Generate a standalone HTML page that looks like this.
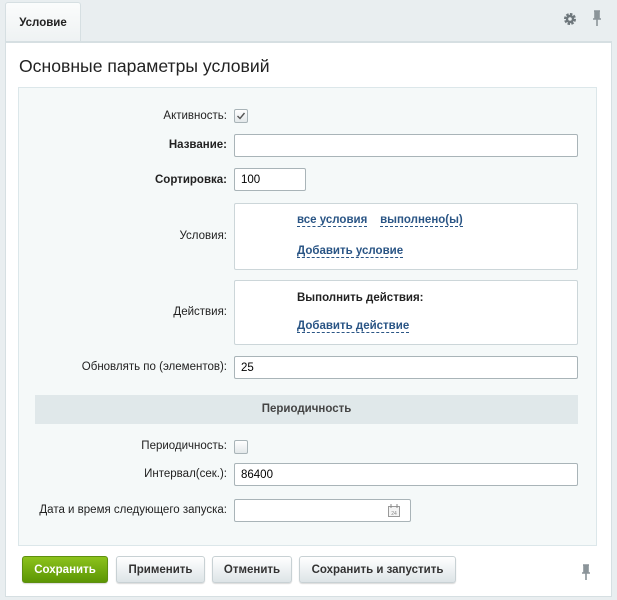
<!DOCTYPE html>
<html><head><meta charset="utf-8"><style>
body{margin:0;width:617px;height:600px;background:#e9eef0;font-family:"Liberation Sans",Arial,sans-serif;font-size:11.5px;color:#000;position:relative;overflow:hidden}
.abs{position:absolute}
.tab{left:5px;top:2px;width:74px;height:39px;background:linear-gradient(#fbfcfc,#eef2f3);border:1px solid #d6dfe2;border-bottom:none;border-radius:3px 3px 0 0;font-weight:bold;font-size:11.5px;line-height:40px;text-align:center;color:#222}
.panel{left:5px;top:41px;width:605px;height:553px;background:#fff;border:1px solid #d6dfe2;border-top:2px solid #d6dfe2}
.title{left:19px;top:56px;font-size:17.6px;color:#222}
.box{left:18px;top:87px;width:577px;height:457px;background:#f5f9f9;border:1px solid #dce7ea}
.lbl{position:absolute;right:390px;text-align:right;color:#222}
.inp{position:absolute;left:234px;height:21px;background:#fff;border:1px solid #a9b4b8;border-radius:2px;box-sizing:border-box;padding:4px 6px;line-height:14px}
.cb{position:absolute;left:234px;width:12px;height:12px;border:1px solid #a9b4b8;border-radius:2px;background:linear-gradient(#fff,#e3e8ea)}
.wbox{position:absolute;left:234px;width:344px;background:#fff;border:1px solid #ccd6d9;border-radius:2px;box-sizing:border-box}
.lnk{color:#2a5585;font-weight:bold;border-bottom:1px dashed #2a5585}
.btn{position:absolute;top:556px;height:27px;border-radius:3px;box-sizing:border-box;text-align:center;line-height:26px;font-weight:bold;color:#333;background:linear-gradient(#fff,#dde4e7);border:1px solid #c8d1d4;box-shadow:0 1px 1px rgba(0,0,0,.15)}
</style></head><body>
<div class="abs tab">Условие</div>
<svg class="abs" style="left:563px;top:12px" width="14" height="14" viewBox="0 0 14 14"><circle cx="7" cy="7" r="4.5" fill="none" stroke="#6e777c" stroke-width="3" stroke-dasharray="2.3 1.2"/><circle cx="7" cy="7" r="3" fill="none" stroke="#6e777c" stroke-width="2.4"/></svg>
<svg class="abs" style="left:592px;top:10px" width="10" height="17" viewBox="0 0 10 17"><path d="M2 1h6M3 1v8M7 1v8M1 9h8M5 9v7" stroke="#8b9499" stroke-width="1.6" fill="none"/><rect x="3" y="1" width="4" height="8" fill="#8b9499"/></svg>
<div class="abs panel"></div>
<div class="abs title">Основные параметры условий</div>
<div class="abs box"></div>
<div class="lbl" style="top:110px">Активность:</div>
<div class="cb" style="top:109px"><svg width="12" height="12" style="position:absolute;left:0;top:0"><path d="M2.5 6l2.5 2.5 4.5-5.5" stroke="#555" stroke-width="1.4" fill="none"/></svg></div>
<div class="lbl" style="top:139px;font-weight:bold">Название:</div>
<div class="inp" style="top:134px;width:344px;height:23px"></div>
<div class="lbl" style="top:174px;font-weight:bold">Сортировка:</div>
<div class="inp" style="top:168px;width:72px;height:23px">100</div>
<div class="lbl" style="top:230px">Условия:</div>
<div class="wbox" style="top:203px;height:67px"><div style="position:absolute;left:62px;top:10px"><span class="lnk">все условия</span>&nbsp;&nbsp;&nbsp; <span class="lnk">выполнено(ы)</span></div><div style="position:absolute;left:62px;top:41px"><span class="lnk">Добавить условие</span></div></div>
<div class="lbl" style="top:306px">Действия:</div>
<div class="wbox" style="top:280px;height:65px"><div style="position:absolute;left:62px;top:11px;font-weight:bold;color:#222">Выполнить действия:</div><div style="position:absolute;left:62px;top:39px"><span class="lnk">Добавить действие</span></div></div>
<div class="lbl" style="top:361px">Обновлять по (элементов):</div>
<div class="inp" style="top:356px;width:344px;height:23px">25</div>
<div class="abs" style="left:35px;top:395px;width:543px;height:29px;background:#e0e8ea;text-align:center;line-height:29px;font-weight:bold;color:#444">Периодичность</div>
<div class="lbl" style="top:440px">Периодичность:</div>
<div class="cb" style="top:440px"></div>
<div class="lbl" style="top:468px">Интервал(сек.):</div>
<div class="inp" style="top:463px;width:344px;height:23px">86400</div>
<div class="lbl" style="top:504px">Дата и время следующего запуска:</div>
<div class="inp" style="top:499px;width:177px;height:23px"><svg width="12" height="13" style="position:absolute;right:10px;top:4px"><rect x="0.5" y="2.5" width="11" height="10" fill="#f4f4f4" stroke="#999"/><path d="M3 0v4M9 0v4" stroke="#888"/><text x="6" y="11" font-size="5" text-anchor="middle" fill="#888">24</text></svg></div>
<div class="btn" style="left:22px;width:86px;color:#fff;background:linear-gradient(#8cc21c,#5c9604);border-color:#5e8f10">Сохранить</div>
<div class="btn" style="left:116px;width:89px">Применить</div>
<div class="btn" style="left:212px;width:80px">Отменить</div>
<div class="btn" style="left:299px;width:157px">Сохранить и запустить</div>
<svg class="abs" style="left:581px;top:564px" width="10" height="17" viewBox="0 0 10 17"><path d="M2 1h6M3 1v8M7 1v8M1 9h8M5 9v7" stroke="#8b9499" stroke-width="1.6" fill="none"/><rect x="3" y="1" width="4" height="8" fill="#8b9499"/></svg>
</body></html>
